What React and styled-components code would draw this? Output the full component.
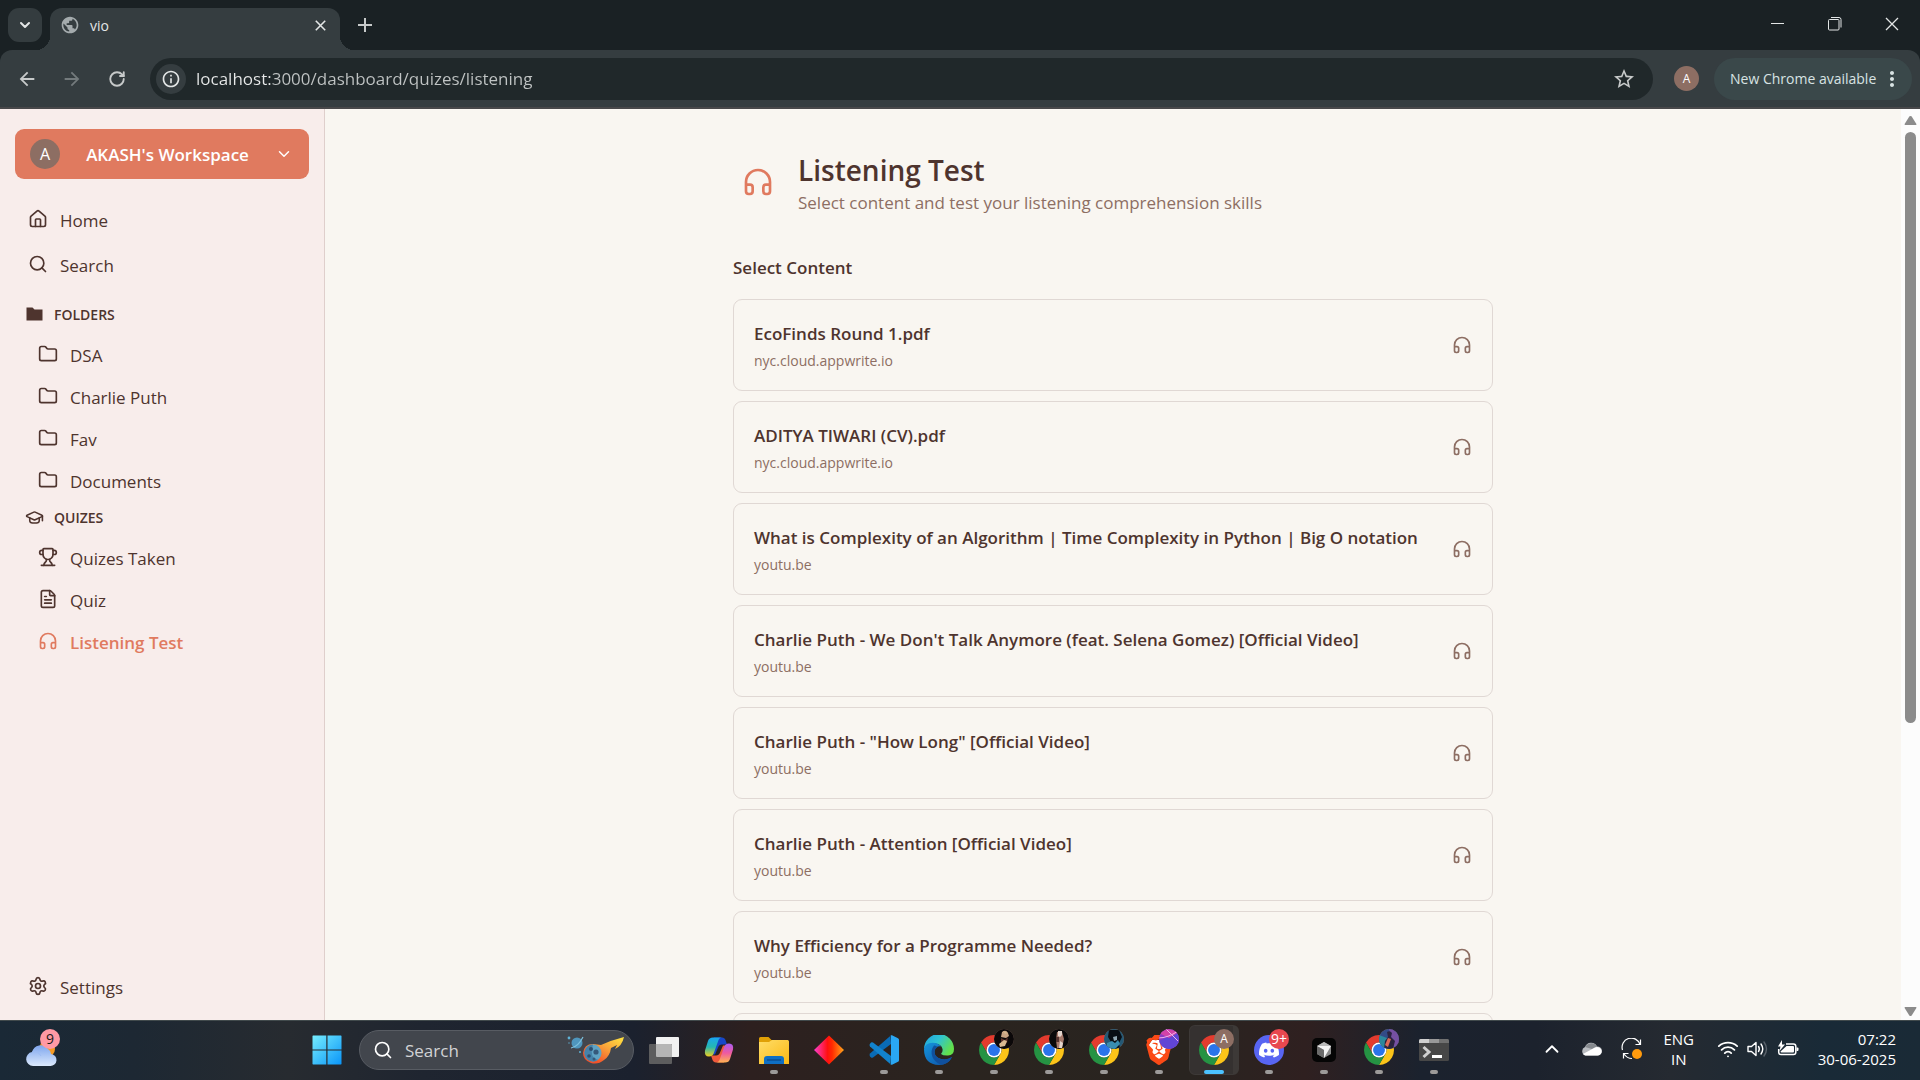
import React from "react";
import styled, { createGlobalStyle, css } from "styled-components";
import {
  ChevronDown,
  ChevronUp,
  FileText,
  Folder,
  GraduationCap,
  Headphones,
  House,
  RotateCw,
  Search,
  Settings,
  Trophy,
  Wifi,
} from "lucide-react";
import {
  MdArrowBack,
  MdArrowForward,
  MdInfoOutline,
  MdMoreVert,
  MdPublic,
  MdStarOutline,
} from "react-icons/md";
import { SiBrave, SiDiscord } from "react-icons/si";

const GlobalStyle = createGlobalStyle`
  *, *::before, *::after {
    box-sizing: border-box;
  }

  body {
    margin: 0;
    font-family: "Open Sans", "Noto Sans", sans-serif;
    font-size: 17px;
    overflow: hidden;
  }

  h1, h2, h3, p, ul {
    margin: 0;
    padding: 0;
  }

  ul {
    list-style: none;
  }

  button, input {
    border: 0;
    padding: 0;
    background: none;
    color: inherit;
    font: inherit;
  }

  a {
    color: inherit;
    text-decoration: none;
  }

  svg {
    display: block;
    flex: none;
  }
`;

const Screen = styled.div`
  display: flex;
  flex-direction: column;
  height: 100vh;
`;

/* ---------- browser ---------- */

const TabStrip = styled.div`
  display: flex;
  flex: none;
  height: 50px;
  padding: 8px 0 0 8px;
  background: #1a2124;
  color: #e3e6e6;
`;

const TabMenu = styled.button`
  display: grid;
  place-items: center;
  width: 34px;
  height: 34px;
  border-radius: 11px;
  background: #343c3f;
`;

const Tab = styled.div`
  position: relative;
  display: flex;
  align-items: center;
  gap: 10px;
  width: 290px;
  height: 42px;
  margin-left: 8px;
  padding: 0 10px 8px;
  border-radius: 12px 12px 0 0;
  background: #353d40;
  font-size: 14px;

  &::before,
  &::after {
    content: "";
    position: absolute;
    bottom: 0;
    width: 14px;
    height: 14px;
  }

  &::before {
    right: 100%;
    background: radial-gradient(circle at 0 0, transparent 14px, #353d40 14px);
  }

  &::after {
    left: 100%;
    background: radial-gradient(circle at 100% 0, transparent 14px, #353d40 14px);
  }
`;

const TabTitle = styled.span`
  flex: 1;
`;

const IconButton = styled.button`
  display: grid;
  place-items: center;
  width: ${(props) => props.$size || 20}px;
  height: ${(props) => props.$size || 20}px;
  border-radius: 50%;
  color: ${(props) => props.$color || "inherit"};
  background: ${(props) => props.$background || "none"};
`;

const NewTab = styled(IconButton)`
  margin: 2px 0 0 10px;
  color: #c7caca;
`;

const WindowControls = styled.div`
  display: flex;
  height: 32px;
  margin-left: auto;
`;

const WindowButton = styled.button`
  display: grid;
  place-items: center;
  width: 57px;
  height: 32px;
`;

const ToolbarWrap = styled.div`
  flex: none;
  background: #1a2124;
`;

const Toolbar = styled.div`
  display: flex;
  align-items: center;
  height: 59px;
  padding: 0 8px;
  border-bottom: 2px solid #48484a;
  border-radius: 12px 12px 0 0;
  background: #353d40;
  color: #c7caca;
`;

const NavButtons = styled.div`
  display: flex;
  gap: 7px;
  margin-right: 14px;
`;

const AddressBar = styled.label`
  display: flex;
  flex: 1;
  align-items: center;
  gap: 10px;
  height: 42px;
  padding: 0 16px 0 6px;
  border-radius: 21px;
  background: #20282a;
`;

const Address = styled.input`
  flex: 1;
  min-width: 0;
  height: 30px;
  outline: none;
  background: linear-gradient(90deg, #e8eaea 75px, #c0c4c4 75px);
  background-clip: text;
  color: transparent;
`;

const ProfileButton = styled.button`
  width: 25px;
  height: 25px;
  margin: 0 15px 0 21px;
  border-radius: 50%;
  background: #8d6e63;
  color: #fff;
  font-size: 12px;
`;

const UpdateButton = styled.button`
  display: flex;
  align-items: center;
  justify-content: space-between;
  width: 198px;
  height: 42px;
  padding: 0 8px 0 16px;
  border-radius: 21px;
  background: #3a484a;
  color: #d8e3e3;
  font-size: 14px;
  white-space: nowrap;
`;

/* ---------- app ---------- */

const Page = styled.div`
  display: flex;
  flex: 1;
  min-height: 0;
  background: #f9f6f1;
  color: #4e342e;
`;

const Sidebar = styled.aside`
  display: flex;
  flex-direction: column;
  flex: none;
  width: 325px;
  padding: 20px 15px 10px;
  border-right: 1px solid #dfcfcc;
  background: #f8edeb;
`;

const Workspace = styled.button`
  display: flex;
  align-items: center;
  justify-content: space-between;
  flex: none;
  height: 50px;
  margin-bottom: 19px;
  padding: 0 16px 0 15px;
  border-radius: 9px;
  background: #e07a5f;
  color: #fff;
  font-weight: 600;
`;

const Avatar = styled.span`
  width: 30px;
  border-radius: 50%;
  background: #8d6e63;
  font-size: 16px;
  font-weight: 400;
  line-height: 30px;
`;

const MenuLink = styled.a`
  display: flex;
  align-items: center;
  gap: 12px;
  height: 45px;
  padding-left: 13px;

  svg {
    margin-bottom: 3px;
  }

  ${(props) =>
    props.$nested &&
    css`
      height: 42px;
      padding-left: 23px;
    `}

  ${(props) =>
    props.$active &&
    css`
      color: #e07a5f;
      font-weight: 600;
    `}
`;

const GroupTitle = styled.h2`
  display: flex;
  align-items: center;
  gap: 10px;
  height: 26px;
  padding-left: 10px;
  font-size: 14px;
  font-weight: 600;
`;

const Group = styled.section`
  margin-top: ${(props) => props.$top || 0}px;

  ul {
    display: flex;
    flex-direction: column;
    padding-top: 7px;
  }
`;

const SidebarFooter = styled.div`
  margin-top: auto;
`;

const Main = styled.main`
  flex: 1;
  min-width: 0;
  overflow: hidden;
`;

const Content = styled.div`
  max-width: 760px;
  margin: 0 auto;
  padding-top: 43px;
`;

const Heading = styled.header`
  display: flex;
  align-items: flex-start;
  gap: 24px;
  padding-left: 9px;
  color: #e07a5f;

  > svg {
    margin-top: 14px;
  }
`;

const Title = styled.h1`
  color: #4e342e;
  font-size: 28px;
  font-weight: 600;
  line-height: 36px;
`;

const Subtitle = styled.p`
  color: #8d6e63;
  line-height: 30px;
`;

const SectionTitle = styled.h2`
  margin: 35px 0 17px;
  font-size: 17px;
  font-weight: 600;
  line-height: 29px;
`;

const CardList = styled.ul`
  display: flex;
  flex-direction: column;
  gap: 10px;
`;

const Card = styled.button`
  display: flex;
  align-items: center;
  justify-content: space-between;
  width: 100%;
  height: 92px;
  padding: 0 20px;
  border: 1px solid #e0d8d4;
  border-radius: 9px;
  text-align: left;

  svg {
    color: #8d6e63;
  }
`;

const CardText = styled.div`
  padding-top: 2px;
`;

const CardTitle = styled.h3`
  color: #4e342e;
  font-size: 17px;
  font-weight: 600;
  line-height: 29px;
`;

const CardSource = styled.p`
  color: #8d6e63;
  font-size: 14px;
  line-height: 26px;
`;

const ScrollTrack = styled.div`
  display: flex;
  flex-direction: column;
  align-items: center;
  flex: none;
  width: 19px;
  padding: 6px 0 3px;
  background: #fcfcfc;
  color: #8b8b8b;
`;

const ScrollSpace = styled.div`
  flex: 1;
  width: 11px;
  margin: 6px 0 5px;
`;

const ScrollThumb = styled.div`
  height: 68%;
  border-radius: 6px;
  background: #8b8b8b;
`;

/* ---------- taskbar ---------- */

const Taskbar = styled.footer`
  display: flex;
  align-items: center;
  flex: none;
  height: 60px;
  border-top: 1px solid #414a4c;
  background: linear-gradient(
    90deg,
    #1a2936 0%,
    #1d2833 7%,
    #272b30 15%,
    #1f2530 22%,
    #1b212e 33%,
    #2d201f 39%,
    #2a241f 50%,
    #292420 62%,
    #2f2020 68%,
    #1b222e 74%,
    #1c222d 80%,
    #252a31 87%,
    #192a37 95%,
    #1a2a36 100%
  );
  color: #fff;
`;

const Widgets = styled.button`
  position: relative;
  width: 300px;
  height: 58px;
  padding-left: 25px;
`;

const CountBadge = styled.span`
  position: absolute;
  top: ${(props) => props.$top}px;
  left: ${(props) => props.$left}px;
  width: 20px;
  height: 20px;
  border-radius: 50%;
  background: ${(props) => props.$color};
  color: ${(props) => props.$text || "#fff"};
  font-size: 14px;
  line-height: 20px;
  text-align: center;
`;

const TaskbarApps = styled.div`
  display: flex;
  align-items: center;
  padding-bottom: 1px;
`;

const AppButton = styled.button`
  position: relative;
  display: grid;
  place-items: center;
  width: 55px;
  height: 50px;

  ${(props) =>
    props.$running &&
    css`
      &::after {
        content: "";
        position: absolute;
        bottom: 1px;
        width: 8px;
        height: 4px;
        border-radius: 2px;
        background: #9c9a99;
      }
    `}

  ${(props) =>
    props.$active &&
    css`
      &::before {
        content: "";
        position: absolute;
        inset: 0 2px 0 3px;
        border: 1px solid #3d3937;
        border-right-width: 6px;
        border-radius: 6px;
        background: #353130;
      }

      &::after {
        width: 20px;
        background: #4cc2ff;
      }
    `}

  > svg {
    position: relative;
  }
`;

const ProfileBadge = styled.span`
  position: absolute;
  top: 4px;
  left: 28px;
  width: 20px;
  height: 20px;
  border-radius: 50%;
  overflow: hidden;
  background: #8d6e63;
  font-size: 12px;
  line-height: 20px;
`;

const StartButton = styled.button`
  display: grid;
  place-items: center;
  width: 54px;
  height: 50px;
`;

const SearchBox = styled.label`
  display: flex;
  align-items: center;
  gap: 12px;
  width: 275px;
  height: 40px;
  margin: 0 2px 0 5px;
  padding: 0 8px 0 13px;
  border: 1px solid #585c63;
  border-radius: 20px;
  background: #42464d;
`;

const SearchInput = styled.input`
  flex: 1;
  min-width: 0;
  outline: none;

  &::placeholder {
    color: #d2d3d5;
    opacity: 1;
  }
`;

const Tray = styled.div`
  display: flex;
  align-items: center;
  margin-left: auto;
  padding: 0 24px 3px 0;
  font-size: 15px;
  line-height: 20px;
`;

const TrayButton = styled.button`
  display: flex;
  align-items: center;
  justify-content: center;
  gap: ${(props) => props.$gap || 0}px;
  width: ${(props) => props.$width || 40}px;
  height: 48px;
`;

const Clock = styled.button`
  margin-left: 8px;
  line-height: 20px;
  text-align: right;
`;

const CloseIcon = ({ size, width = 1 }) => (
  <svg width={size} height={size} viewBox="0 0 14 14" fill="none" stroke="currentColor" strokeWidth={width}>
    <path d="M1 1l12 12M13 1L1 13" />
  </svg>
);

const PlusIcon = () => (
  <svg width="14" height="14" viewBox="0 0 14 14" fill="none" stroke="currentColor" strokeWidth="2">
    <path d="M7 0v14M0 7h14" />
  </svg>
);

const MinimizeIcon = () => (
  <svg width="14" height="14" viewBox="0 0 14 14" stroke="currentColor">
    <path d="M0 6.5h13" />
  </svg>
);

const RestoreIcon = () => (
  <svg width="14" height="14" viewBox="0 0 14 14" fill="none" stroke="currentColor">
    <rect x="0.500" y="2.500" width="10.500" height="10.500" rx="1" />
    <path d="M3 .5h8a2 2 0 0 1 2 2v8" />
  </svg>
);

const SolidFolder = () => (
  <svg width="19" height="16" viewBox="0 0 19 16" fill="currentColor">
    <path d="M1.500 1.500h6l2 2h8v11h-16z" />
  </svg>
);

const ArrowHead = ({ down }) => (
  <svg width="13" height="11" viewBox="0 0 13 11" fill="currentColor">
    {down ? (
      <path d="M1.200 1h10.600q1 .2.600 1L7.500 9.700q-1 .8-2 0L.6 2Q.3 1.200 1.200 1z" />
    ) : (
      <path d="M1.200 10h10.600q1-.2.600-1L7.500 1.300q-1-.8-2 0L.6 9q-.3.8.6 1z" />
    )}
  </svg>
);

const WeatherIcon = () => (
  <svg width="32" height="38" viewBox="0 0 32 38">
    <defs>
      <linearGradient id="cloud" x1="0" y1="0" x2="0" y2="1">
        <stop offset="0" stopColor="#7ea6ee" />
        <stop offset="1" stopColor="#dbe9fc" />
      </linearGradient>
    </defs>
    <circle cx="22" cy="17" r="8" fill="#f59a23" />
    <path
      d="M8 34a7 7 0 0 1-1-13.900A9 9 0 0 1 23 17a6 6 0 0 1 3 5 6 6 0 0 1-1 12z"
      fill="url(#cloud)"
    />
    <path d="M7 20a8 8 0 0 1 9 4" fill="none" stroke="#9dbcf4" />
  </svg>
);

const WindowsIcon = () => (
  <svg width="30" height="30" viewBox="0 0 30 30">
    <defs>
      <linearGradient id="win" x1="0" y1="0" x2="1" y2="1">
        <stop offset="0" stopColor="#76edfe" />
        <stop offset="1" stopColor="#0a95f8" />
      </linearGradient>
    </defs>
    <path
      fill="url(#win)"
      d="M1 .5h13.300v14H.5V1zM15.500.5H29l.5.5v13.500h-14zM.5 15.500h13.800v14H1l-.5-.5zM15.500 15.500h14V29l-.5.5H15.500z"
    />
  </svg>
);

const CometIcon = () => (
  <svg width="58" height="32" viewBox="0 0 58 32">
    <defs>
      <linearGradient id="flame" x1="0" y1="1" x2="1" y2="0">
        <stop offset="0.200" stopColor="#f0522b" />
        <stop offset="0.600" stopColor="#fba63a" />
        <stop offset="1" stopColor="#ffe640" />
      </linearGradient>
    </defs>
    <circle cx="10" cy="9" r="5.500" fill="#4f96bd" />
    <path d="M4 14q7-1 12-11" fill="none" stroke="#7cc0dc" strokeWidth="1.200" />
    <circle cx="2" cy="4" r="1.400" fill="#5fb2d6" />
    <circle cx="2" cy="9" r="0.700" fill="#5fb2d6" />
    <circle cx="13" cy="18" r="1" fill="#5fb2d6" />
    <path
      d="M57 3q-2 9-9 12l2-4-6 3q-1 8-7 12-6 5-13 3-8-3-8-10 1-9 10-9l8 1Q45 6 57 3z"
      fill="url(#flame)"
    />
    <circle cx="26" cy="19" r="8.500" fill="#5fa3c4" />
    <path d="M26 10.500a8.500 8.500 0 1 0 5 15.300Q22 24 26 10.500z" fill="#4583ab" />
    <circle cx="24" cy="15" r="2" fill="#2d4f70" />
    <circle cx="29" cy="18" r="2.600" fill="#35597a" />
    <circle cx="22" cy="22" r="1.800" fill="#2d4f70" />
    <circle cx="27" cy="25" r="1.500" fill="#35597a" />
  </svg>
);

const TaskViewIcon = () => (
  <svg width="30" height="30" viewBox="0 0 30 30">
    <rect x="7" y="2" width="23" height="20" rx="1" fill="#f1f1f1" />
    <rect x="0" y="9" width="23" height="20" rx="1" fill="#5d5d5e" />
    <path d="M7 9h15a1 1 0 0 1 1 1v12H8a1 1 0 0 1-1-1z" fill="#b5b5b5" />
  </svg>
);

const CopilotIcon = () => (
  <svg width="30" height="30" viewBox="0 0 30 30">
    <defs>
      <linearGradient id="copA" x1="0" y1="0" x2="0" y2="1">
        <stop offset="0" stopColor="#1aa5f0" />
        <stop offset="0.500" stopColor="#25b7b1" />
        <stop offset="1" stopColor="#f2cf1c" />
      </linearGradient>
      <linearGradient id="copB" x1="0" y1="0" x2="0" y2="1">
        <stop offset="0" stopColor="#a95cf5" />
        <stop offset="0.500" stopColor="#ee5aa0" />
        <stop offset="1" stopColor="#ffb352" />
      </linearGradient>
    </defs>
    <path d="M10 2.500h8q3 0 4 4l1 3h-5q-3 0-4 3l-3 7H8z" fill="#1747c9" />
    <path d="M20 27.500h-8q-3 0-4-4l-1-3h5q3 0 4-3l3-7h3z" fill="#ef5a3c" />
    <path d="M9 2.500h9q-3 0-4 4l-4 11q-1 4-5 4-5 0-4-6L4 6q1-3.500 5-3.500z" fill="url(#copA)" />
    <path d="M21 27.500h-9q3 0 4-4l4-11q1-4 5-4 5 0 4 6l-3 9.500q-1 3.500-5 3.500z" fill="url(#copB)" />
  </svg>
);

const ExplorerIcon = () => (
  <svg width="30" height="30" viewBox="0 0 30 30">
    <defs>
      <linearGradient id="folder" x1="0" y1="0" x2="1" y2="1">
        <stop offset="0" stopColor="#ffdd68" />
        <stop offset="1" stopColor="#fbb914" />
      </linearGradient>
    </defs>
    <path d="M0 3.500Q0 2 1.500 2h8l3 3H29v10H0z" fill="#e0a006" />
    <path d="M0 7h10l3-2h15.500Q30 5 30 6.500V29H0z" fill="url(#folder)" />
    <path d="M5 29v-5q0-3 3-3h14q3 0 3 3v5z" fill="#0f6fc4" />
    <path d="M8 25h14" stroke="#0a4a8c" strokeWidth="1.300" />
  </svg>
);

const DiamondIcon = () => (
  <svg width="30" height="30" viewBox="0 0 30 30">
    <defs>
      <linearGradient id="diamond">
        <stop offset="0" stopColor="#fb3fd0" />
        <stop offset="0.450" stopColor="#ff1010" />
        <stop offset="0.600" stopColor="#ff2a00" />
        <stop offset="1" stopColor="#ffa51c" />
      </linearGradient>
    </defs>
    <path d="M15 .5L30 15 15 29.500 0 15z" fill="url(#diamond)" />
  </svg>
);

const VsCodeIcon = () => (
  <svg width="30" height="30" viewBox="0 0 30 30">
    <path d="M1 18.500L21.500.8 22 9 4 22.500q-1 .6-2 0l-1-1.200q-1-1.300 0-2.800z" fill="#0a6bb5" />
    <path d="M1 11.500L21.500 29.200 22 21 4 7.500q-1-.6-2 0L1 8.700q-1 1.300 0 2.800z" fill="#1283cd" />
    <path d="M21.500.3Q22 0 23 .3l6 2.900q1 .5 1 1.500v20.600q0 1-1 1.500l-6 2.900q-1 .3-1.800-.4.8.2.8-.8V1.500q0-1-.5-1.200z" fill="#2aa7f3" />
  </svg>
);

const EdgeIcon = () => (
  <svg width="30" height="30" viewBox="0 0 30 30">
    <defs>
      <linearGradient id="edgeTop" x1="0" y1="0" x2="1" y2="0.500">
        <stop offset="0" stopColor="#1f9fe0" />
        <stop offset="0.500" stopColor="#2fc3d2" />
        <stop offset="1" stopColor="#62e04b" />
      </linearGradient>
      <linearGradient id="edgeLow" x1="0" y1="0" x2="1" y2="1">
        <stop offset="0" stopColor="#1595dc" />
        <stop offset="1" stopColor="#0d4fa5" />
      </linearGradient>
    </defs>
    <path d="M0 14A15 15 0 0 1 30 14q0 6-6 6.500-5 .2-7-1.500 2-2 1.500-5-1-5-7.500-5.500Q3 8 0 14z" fill="url(#edgeTop)" />
    <path d="M0 14q1-6 8.500-6.300 6 0 8.500 3.800-5-1-6.500 4.500-.5 6 6.500 8 6 1.500 11-2-4 8-13 8Q0 29.500 0 14z" fill="url(#edgeLow)" />
    <path d="M10 10.500q-4 5-1.500 11.500 2 5 8.500 7.800Q25 29 28 22q-5 3.500-11 2-7-2-6.500-8 .7-2.700 3-4-1.500-1.700-3.500-1.500z" fill="#10509d" />
  </svg>
);

const ChromeIcon = () => (
  <svg width="30" height="30" viewBox="2 2 44 44">
    <path d="M4.950 13A22 22 0 0 1 43.050 13H24A11 11 0 0 0 14.470 29.500z" fill="#e33b2e" />
    <path d="M43.050 13A22 22 0 0 1 24 46L33.530 29.500A11 11 0 0 0 24 13z" fill="#fcc419" />
    <path d="M24 46A22 22 0 0 1 4.950 13L14.470 29.500A11 11 0 0 0 33.530 29.500z" fill="#259343" />
    <circle cx="24" cy="24" r="11" fill="#fff" />
    <circle cx="24" cy="24" r="8.700" fill="#2a74ea" />
  </svg>
);

const BraveIcon = () => (
  <svg width="30" height="30" viewBox="0 0 30 30">
    <path d="M8 5h14l4 6-3 11-8 6-8-6-3-11z" fill="#fff" />
    <SiBrave size={30} color="#fb4a16" />
  </svg>
);

const DiscordIcon = () => (
  <svg width="30" height="30" viewBox="0 0 30 30">
    <circle cx="15" cy="15" r="15" fill="#5865f2" />
    <SiDiscord x="5" y="5" size={20} color="#fff" />
  </svg>
);

const CursorIcon = () => (
  <svg width="24" height="24" viewBox="0 0 24 24">
    <rect width="24" height="24" rx="5" fill="#050505" />
    <path d="M12 4l7 4v8l-7 4-7-4V8z" fill="#8a8a8a" />
    <path d="M5 8l7-4 7 4-7 4z" fill="#b9b9b9" />
    <path d="M5 8h14l-7 12v-8z" fill="#f4f4f4" />
    <path d="M5 8l7 4v8l-7-4z" fill="#6b6b6b" />
  </svg>
);

const TerminalIcon = () => (
  <svg width="30" height="22" viewBox="0 0 30 22">
    <rect width="30" height="22" rx="1.500" fill="#474747" />
    <path d="M1.500 0H10v4H0V1.500Q0 0 1.500 0z" fill="#d0d0d0" />
    <path d="M10 0h10v4H10z" fill="#999" />
    <path d="M20 0h8.500Q30 0 30 1.500V4H20z" fill="#707070" />
    <path d="M4.500 8l5.500 5-5.500 5" fill="none" stroke="#cfcfcf" strokeWidth="3" />
    <path d="M13 17.500h10" stroke="#fff" strokeWidth="3" />
  </svg>
);

const OneDriveIcon = () => (
  <svg width="21" height="14" viewBox="0 0 21 14">
    <path d="M4.500 13.500A4.500 4.500 0 0 1 4 5a6.500 6.500 0 0 1 12-.5 4.500 4.500 0 0 1 1 9z" fill="#b9bcc0" />
    <path d="M6 2.800A6.500 6.500 0 0 1 16 4.500L11 7 4 5z" fill="#85898e" />
    <path d="M2 12l12-6.500q2-1.200 4 0 3 1.500 2.500 5-1 3-4 3h-12q-1.500-.3-2.500-1.500z" fill="#fff" />
  </svg>
);

const SyncIcon = () => (
  <svg width="22" height="22" viewBox="0 0 22 22" fill="none" stroke="#fff" strokeWidth="1.200">
    <path d="M1.500 12A9 9 0 0 1 19 6.500M19.500 1.500v5h-5M2.500 20.500v-5h5M3 16q3 4.500 8 4.500" />
    <circle cx="16" cy="16" r="5" fill="#ff9a0d" stroke="none" />
  </svg>
);

const VolumeIcon = () => (
  <svg width="22" height="18" viewBox="0 0 22 18" fill="none" stroke="#fff" strokeWidth="1.400" strokeLinejoin="round">
    <path d="M1 6.500h3.500L9 2.500v13l-4.500-4H1z" />
    <path d="M11.500 6.500q1.700 2.500 0 5M14 4q3.500 5 0 10" strokeLinecap="round" />
    <path d="M17 2q5 7 0 14" stroke="#58616a" strokeLinecap="round" />
  </svg>
);

const BatteryIcon = () => (
  <svg width="22" height="18" viewBox="0 0 22 18" fill="none" stroke="#fff" strokeWidth="1.500">
    <path d="M9 4h7.500q2.300 0 2.300 2.300v5.900q0 2.300-2.300 2.300H4q-2.300 0-2.300-2.300V9" />
    <path d="M19.500 7.500h1q1 0 1 1v1.500q0 1-1 1h-1z" fill="#fff" stroke="none" />
    <path d="M9.500 6h6.500q1 0 1 1v4.500q0 1-1 1H4.500q-1 0-1-1z" fill="#fff" stroke="none" />
    <path d="M5 0L1 6.500h2.500L2.500 11l5.500-6.500H5z" fill="#fff" stroke="none" />
  </svg>
);

/* tiny portraits that sit over the browser icons of other profiles */
const Portrait = ({ kind }) => (
  <svg width="20" height="20" viewBox="0 0 20 20">
    {kind === "gold" && (
      <g>
        <rect width="20" height="20" fill="#0b0809" />
        <path d="M8 3q4-3 6 1l1 3-3 2-5-1z" fill="#c9a483" />
        <path d="M7 9l4 2 3-3-1 6-6 3z" fill="#59302a" />
        <path d="M9 2l5 2-3 1zM5 15l5-4 3 1-2 5-5 1z" fill="#d8b890" />
      </g>
    )}
    {kind === "duo" && (
      <g>
        <rect width="20" height="20" fill="#0a0a0b" />
        <path d="M8 3h5l2 7-2 9H8l-1-8z" fill="#a5796b" />
        <path d="M9 2h4v4l-2 2-2-1zM11 12l3 2-1 5h-3z" fill="#e3d5cd" />
        <path d="M7 8h3v5H7z" fill="#553531" />
      </g>
    )}
    {kind === "blue" && (
      <g>
        <rect width="20" height="20" fill="#245874" />
        <path d="M5 1h10l3 7-3 6 1 6H5l2-7-3-5z" fill="#090e14" />
        <path d="M3 14l5-2 3 2 3-3 2 4-5 5H3z" fill="#398db0" />
        <path d="M9 8l4-1v4l-3 1z" fill="#91a7b3" />
      </g>
    )}
    {kind === "swirl" && (
      <g>
        <rect width="20" height="20" fill="#8e38c4" />
        <path d="M0 12l20-9v17H5z" fill="#6145d5" />
        <path d="M0 4L9 0l11 3-10 6z" fill="#d343a8" />
        <path d="M-1 9q10 0 20-7M7 0l12 12" fill="none" stroke="#f1b4ea" />
      </g>
    )}
    {kind === "space" && (
      <g>
        <rect width="20" height="20" fill="#324b87" />
        <path d="M10 0h10v20h-5z" fill="#7650a2" />
        <path d="M0 6l8 3 2 11H0z" fill="#2c889c" />
        <path d="M8 3q3-2 5 1l-1 4 4 4-2 8H5l1-8 3-4z" fill="#2b2440" />
        <path d="M9 9l3 1-3 8-3-2z" fill="#dc6958" />
      </g>
    )}
  </svg>
);

const folders = ["DSA", "Charlie Puth", "Fav", "Documents"];

const quizLinks = [
  { label: "Quizes Taken", icon: Trophy },
  { label: "Quiz", icon: FileText },
  { label: "Listening Test", icon: Headphones, active: true },
];

const contents = [
  { title: "EcoFinds Round 1.pdf", source: "nyc.cloud.appwrite.io" },
  { title: "ADITYA TIWARI (CV).pdf", source: "nyc.cloud.appwrite.io" },
  {
    title: "What is Complexity of an Algorithm | Time Complexity in Python | Big O notation",
    source: "youtu.be",
  },
  {
    title: "Charlie Puth - We Don't Talk Anymore (feat. Selena Gomez) [Official Video]",
    source: "youtu.be",
  },
  { title: 'Charlie Puth - "How Long" [Official Video]', source: "youtu.be" },
  { title: "Charlie Puth - Attention [Official Video]", source: "youtu.be" },
  { title: "Why Efficiency for a Programme Needed?", source: "youtu.be" },
  { title: "", source: "" },
];

const apps = [
  { name: "Task view", icon: TaskViewIcon },
  { name: "Copilot", icon: CopilotIcon },
  { name: "File Explorer", icon: ExplorerIcon, running: true },
  { name: "Diamond", icon: DiamondIcon },
  { name: "Visual Studio Code", icon: VsCodeIcon, running: true },
  { name: "Edge", icon: EdgeIcon, running: true },
  { name: "Chrome 1", icon: ChromeIcon, running: true, portrait: "gold" },
  { name: "Chrome 2", icon: ChromeIcon, running: true, portrait: "duo" },
  { name: "Chrome 3", icon: ChromeIcon, running: true, portrait: "blue" },
  { name: "Brave", icon: BraveIcon, running: true, portrait: "swirl" },
  { name: "Chrome 4", icon: ChromeIcon, running: true, active: true, letter: "A" },
  { name: "Discord", icon: DiscordIcon, running: true, count: "9+" },
  { name: "Cursor", icon: CursorIcon, running: true },
  { name: "Chrome 5", icon: ChromeIcon, running: true, portrait: "space" },
  { name: "Terminal", icon: TerminalIcon, running: true },
];

const Browser = () => (
  <React.Fragment>
    <TabStrip>
      <TabMenu aria-label="Search tabs">
        <ChevronDown size={16} strokeWidth={3} />
      </TabMenu>
      <Tab>
        <MdPublic size={20} color="#a4abad" />
        <TabTitle>vio</TabTitle>
        <IconButton aria-label="Close tab">
          <CloseIcon size={11} width={2} />
        </IconButton>
      </Tab>
      <NewTab $size={30} aria-label="New tab">
        <PlusIcon />
      </NewTab>
      <WindowControls>
        <WindowButton aria-label="Minimize">
          <MinimizeIcon />
        </WindowButton>
        <WindowButton aria-label="Restore">
          <RestoreIcon />
        </WindowButton>
        <WindowButton aria-label="Close">
          <CloseIcon size={14} width={1.3} />
        </WindowButton>
      </WindowControls>
    </TabStrip>
    <ToolbarWrap>
      <Toolbar>
        <NavButtons>
          <IconButton $size={38} aria-label="Back">
            <MdArrowBack size={22} />
          </IconButton>
          <IconButton $size={38} $color="#737a7c" aria-label="Forward">
            <MdArrowForward size={22} />
          </IconButton>
          <IconButton $size={38} aria-label="Reload">
            <RotateCw size={18} strokeWidth={2.5} />
          </IconButton>
        </NavButtons>
        <AddressBar>
          <IconButton $size={30} $color="#e3e6e6" $background="#353d40" aria-label="Site information">
            <MdInfoOutline size={20} />
          </IconButton>
          <Address aria-label="Address" defaultValue="localhost:3000/dashboard/quizes/listening" />
          <IconButton $size={26} aria-label="Bookmark this tab">
            <MdStarOutline size={24} />
          </IconButton>
        </AddressBar>
        <ProfileButton>A</ProfileButton>
        <UpdateButton>
          New Chrome available
          <MdMoreVert size={24} />
        </UpdateButton>
      </Toolbar>
    </ToolbarWrap>
  </React.Fragment>
);

const SideNav = () => (
  <Sidebar>
    <Workspace>
      <Avatar>A</Avatar>
      AKASH's Workspace
      <ChevronDown size={18} />
    </Workspace>
    <nav>
      <MenuLink href="#home">
        <House size={20} />
        Home
      </MenuLink>
      <MenuLink href="#search">
        <Search size={20} />
        Search
      </MenuLink>
      <Group $top={13}>
        <GroupTitle>
          <SolidFolder />
          FOLDERS
        </GroupTitle>
        <ul>
          {folders.map((name) => (
            <li key={name}>
              <MenuLink href="#folder" $nested>
                <Folder size={20} />
                {name}
              </MenuLink>
            </li>
          ))}
        </ul>
      </Group>
      <Group $top={2}>
        <GroupTitle>
          <GraduationCap size={19} />
          QUIZES
        </GroupTitle>
        <ul>
          {quizLinks.map(({ label, icon: Icon, active }) => (
            <li key={label}>
              <MenuLink href="#quiz" $nested $active={active}>
                <Icon size={20} />
                {label}
              </MenuLink>
            </li>
          ))}
        </ul>
      </Group>
    </nav>
    <SidebarFooter>
      <MenuLink href="#settings">
        <Settings size={20} />
        Settings
      </MenuLink>
    </SidebarFooter>
  </Sidebar>
);

const ListeningTest = () => (
  <Main>
    <Content>
      <Heading>
        <Headphones size={32} />
        <div>
          <Title>Listening Test</Title>
          <Subtitle>Select content and test your listening comprehension skills</Subtitle>
        </div>
      </Heading>
      <SectionTitle>Select Content</SectionTitle>
      <CardList>
        {contents.map(({ title, source }, index) => (
          <li key={index}>
            <Card>
              <CardText>
                <CardTitle>{title}</CardTitle>
                <CardSource>{source}</CardSource>
              </CardText>
              <Headphones size={20} />
            </Card>
          </li>
        ))}
      </CardList>
    </Content>
  </Main>
);

const WindowsTaskbar = () => (
  <Taskbar>
    <Widgets aria-label="Widgets">
      <WeatherIcon />
      <CountBadge $top={7} $left={40} $color="#ff99a4" $text="#1a1a1a">
        9
      </CountBadge>
    </Widgets>
    <TaskbarApps>
      <StartButton aria-label="Start">
        <WindowsIcon />
      </StartButton>
      <SearchBox>
        <Search size={20} />
        <SearchInput placeholder="Search" aria-label="Search" />
        <CometIcon />
      </SearchBox>
      {apps.map(({ name, icon: Icon, running, active, portrait, letter, count }) => (
        <AppButton key={name} aria-label={name} $running={running} $active={active}>
          <Icon />
          {portrait && (
            <ProfileBadge>
              <Portrait kind={portrait} />
            </ProfileBadge>
          )}
          {letter && <ProfileBadge>{letter}</ProfileBadge>}
          {count && (
            <CountBadge $top={4} $left={28} $color="#e8484f">
              {count}
            </CountBadge>
          )}
        </AppButton>
      ))}
    </TaskbarApps>
    <Tray>
      <TrayButton aria-label="Show hidden icons">
        <ChevronUp size={22} />
      </TrayButton>
      <TrayButton aria-label="OneDrive">
        <OneDriveIcon />
      </TrayButton>
      <TrayButton aria-label="Windows Update">
        <SyncIcon />
      </TrayButton>
      <TrayButton $width={54}>
        ENG
        <br />
        IN
      </TrayButton>
      <TrayButton $width={104} $gap={8} aria-label="Quick settings">
        <Wifi size={22} />
        <VolumeIcon />
        <BatteryIcon />
      </TrayButton>
      <Clock>
        07:22
        <br />
        30-06-2025
      </Clock>
    </Tray>
  </Taskbar>
);

const App = () => (
  <Screen>
    <GlobalStyle />
    <Browser />
    <Page>
      <SideNav />
      <ListeningTest />
      <ScrollTrack>
        <ArrowHead />
        <ScrollSpace>
          <ScrollThumb />
        </ScrollSpace>
        <ArrowHead down />
      </ScrollTrack>
    </Page>
    <WindowsTaskbar />
  </Screen>
);

export default App;
